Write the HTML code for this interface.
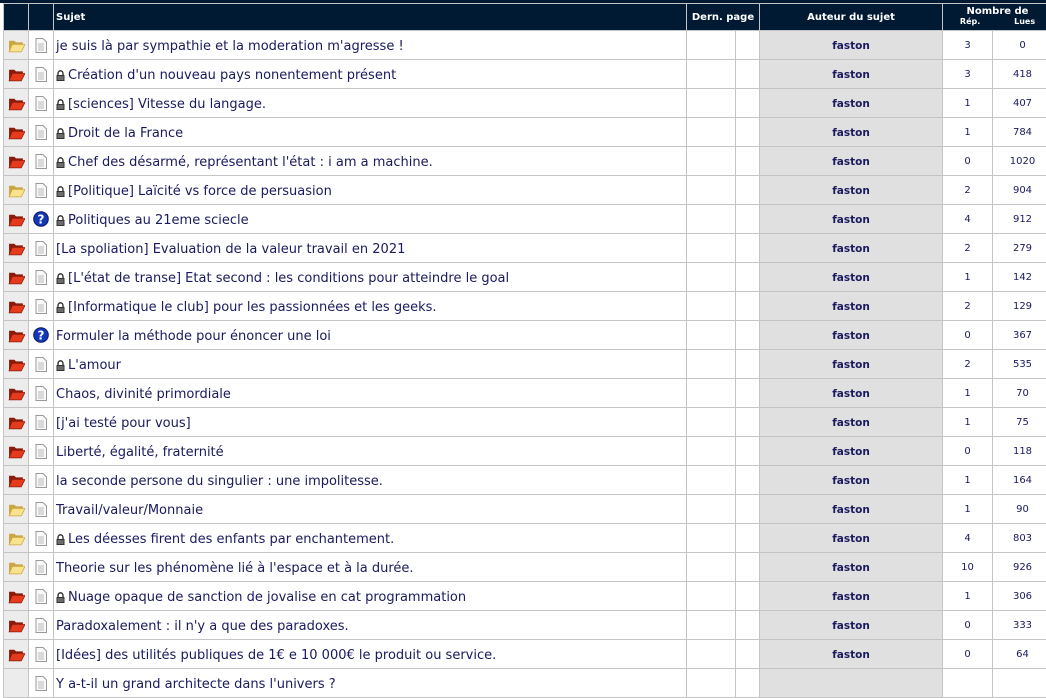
<!DOCTYPE html>
<html><head><meta charset="utf-8"><style>
body{margin:0;background:#fff;width:1046px;height:679px;overflow:hidden;font-family:"DejaVu Sans",Verdana,sans-serif;}
.top{position:absolute;left:0;top:0;width:1046px;height:3px;background:#001a33;}
.wrap{position:absolute;left:3px;top:3px;}
.row{display:grid;grid-template-columns:25px 25px 633px 49px 24px 183px 50px 60px;height:29px;box-sizing:border-box;border-bottom:1px solid #c4c4c4;}
.row>div{border-left:1px solid #c4c4c4;box-sizing:border-box;display:flex;align-items:center;}
.hd{background:#001a33;height:28px;border-top:1px solid #c4c4c4;border-bottom:1px solid #c4c4c4;}
.hd>div{color:#fff;font-weight:bold;font-size:10px;white-space:nowrap;}
.c1{background:#ececec;justify-content:center;}
.c2{justify-content:center;}
.s{font-size:13px;color:#1a1a5e;padding-left:2px;padding-top:2px;white-space:nowrap;}
.a{background:#e0e0e0;justify-content:center;font-weight:bold;font-size:10.5px;color:#1a1a5e;padding-top:1px}
.n{justify-content:center;font-size:10px;color:#1a1a5e;padding-top:1px}
.lk{display:inline-block;width:9px;height:11px;margin-right:3px;position:relative;top:0px}
</style></head><body>
<div class="top"></div>
<div class="wrap">
<div class="row hd"><div></div><div></div><div style="padding-left:2px">Sujet</div><div style="grid-column:4/6;justify-content:center">Dern. page</div><div style="justify-content:center">Auteur du sujet</div><div style="grid-column:7/9;flex-direction:column;justify-content:center;line-height:10px"><span>Nombre de</span><span style="font-size:8px;display:flex;width:100%;justify-content:space-around"><span>Rép.</span><span>Lues</span></span></div></div>
<div id="rows"></div>
</div>
<svg width="0" height="0" style="position:absolute"><defs>
<symbol id="fr" viewBox="0 0 16 14"><path d="M1 2.5h5l1.5 1.5h6.5v2.5H4.5L1 12.5z" fill="#8a1a0a"/><path d="M4 6H16L12.5 13H1z" fill="#e63a1c" stroke="#8a1a0a" stroke-width=".7"/></symbol>
<symbol id="fy" viewBox="0 0 16 14"><path d="M1 2.5h5l1.5 1.5h6.5v2.5H4.5L1 12.5z" fill="#c9a640"/><path d="M4 6H16L12.5 13H1z" fill="#f8e28c" stroke="#c9a640" stroke-width=".7"/></symbol>
<symbol id="dc" viewBox="0 0 12 15"><path d="M1 .5h7l3.5 3.5v10.5H1z" fill="#fafafa" stroke="#999"/><path d="M3 6h6M3 8h6M3 10h6M3 12h6" stroke="#bbb"/></symbol>
<symbol id="q" viewBox="0 0 16 16"><circle cx="8" cy="8" r="7.3" fill="#1437b8" stroke="#0a1a60"/><text x="8" y="12.3" font-size="12" font-weight="bold" text-anchor="middle" fill="#fff" font-family="DejaVu Sans">?</text></symbol>
<symbol id="lk" viewBox="0 0 9 11"><path d="M2 5V3.3a2.5 2.5 0 0 1 5 0V5" fill="none" stroke="#222" stroke-width="1.3"/><rect x=".5" y="5" width="8" height="6" fill="#333"/><path d="M1.5 7h6M1.5 9h6" stroke="#ccc" stroke-width=".7"/></symbol>
</defs></svg>
<script>
const d=[
["y",0,0,"je suis là par sympathie et la moderation m'agresse !",3,0],
["r",0,1,"Création d'un nouveau pays nonentement présent",3,418],
["r",0,1,"[sciences] Vitesse du langage.",1,407],
["r",0,1,"Droit de la France",1,784],
["r",0,1,"Chef des désarmé, représentant l'état : i am a machine.",0,1020],
["y",0,1,"[Politique] Laïcité vs force de persuasion",2,904],
["r",1,1,"Politiques au 21eme sciecle",4,912],
["r",0,0,"[La spoliation] Evaluation de la valeur travail en 2021",2,279],
["r",0,1,"[L'état de transe] Etat second : les conditions pour atteindre le goal",1,142],
["r",0,1,"[Informatique le club] pour les passionnées et les geeks.",2,129],
["r",1,0,"Formuler la méthode pour énoncer une loi",0,367],
["r",0,1,"L'amour",2,535],
["r",0,0,"Chaos, divinité primordiale",1,70],
["r",0,0,"[j'ai testé pour vous]",1,75],
["r",0,0,"Liberté, égalité, fraternité",0,118],
["r",0,0,"la seconde persone du singulier : une impolitesse.",1,164],
["y",0,0,"Travail/valeur/Monnaie",1,90],
["y",0,1,"Les déesses firent des enfants par enchantement.",4,803],
["y",0,0,"Theorie sur les phénomène lié à l'espace et à la durée.",10,926],
["r",0,1,"Nuage opaque de sanction de jovalise en cat programmation",1,306],
["r",0,0,"Paradoxalement : il n'y a que des paradoxes.",0,333],
["r",0,0,"[Idées] des utilités publiques de 1€ e 10 000€ le produit ou service.",0,64],
["",0,0,"Y a-t-il un grand architecte dans l'univers ?","",""]];
let h="";
for(const [f,q,l,t,r,v] of d){
h+=`<div class="row"><div class="c1">${f?`<svg width="17" height="15"><use href="#f${f}"/></svg>`:""}</div><div class="c2">${q?`<svg width="16" height="16"><use href="#q"/></svg>`:`<svg width="12" height="15"><use href="#dc"/></svg>`}</div><div class="s">${l?`<svg class="lk"><use href="#lk"/></svg>`:""}${t}</div><div></div><div></div><div class="a">${f?"faston":""}</div><div class="n">${r}</div><div class="n">${v}</div></div>`;}
document.getElementById("rows").innerHTML=h;
</script>
</body></html>
